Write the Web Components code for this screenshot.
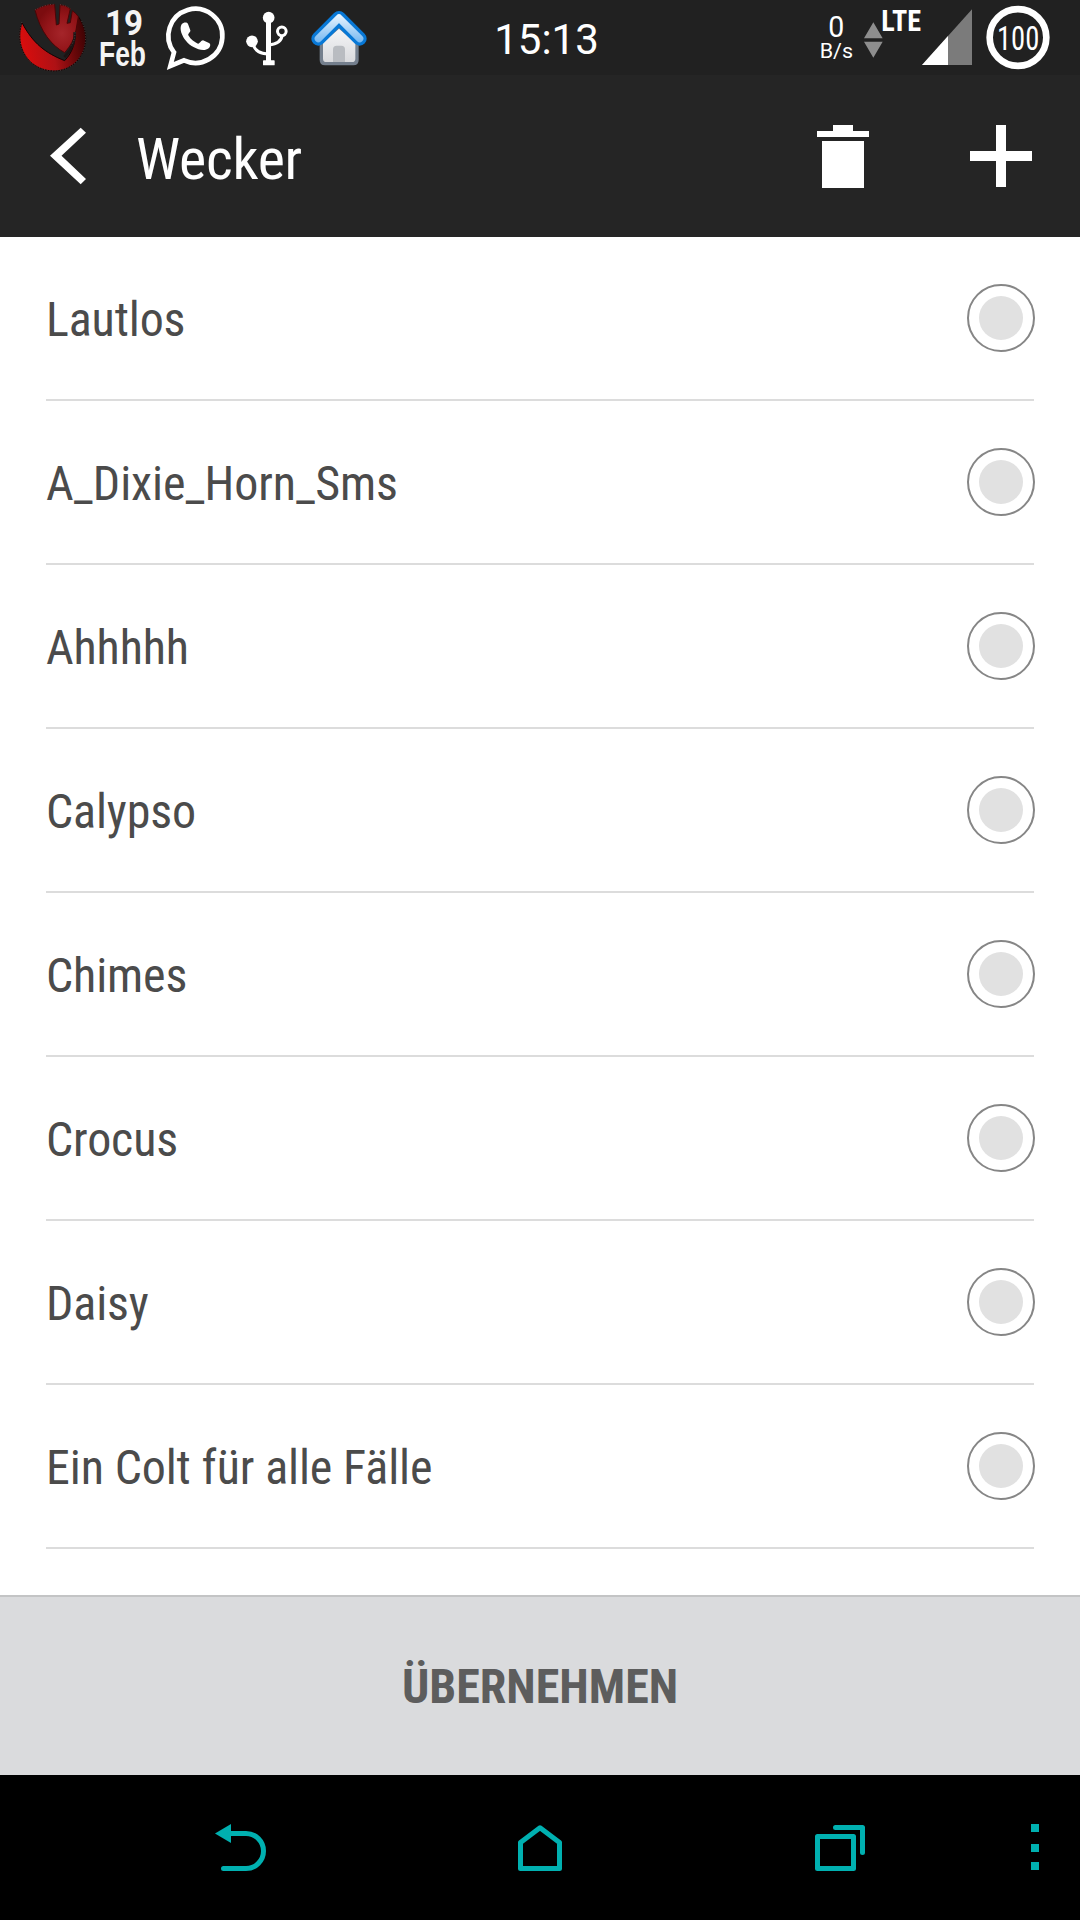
<!DOCTYPE html>
<html lang="de">
<head>
<meta charset="utf-8">
<title>Wecker</title>
<style>
  html, body { margin: 0; background: #fff; }
  body {
    width: 1080px;
    height: 1920px;
    overflow: hidden;
    font-family: "Roboto Condensed", Roboto, sans-serif;
  }
</style>
</head>
<body>
<wk-screen>
  <wk-status slot="status"></wk-status>
  <wk-appbar slot="header">Wecker</wk-appbar>
  <wk-option>Lautlos</wk-option>
  <wk-option>A_Dixie_Horn_Sms</wk-option>
  <wk-option>Ahhhhh</wk-option>
  <wk-option>Calypso</wk-option>
  <wk-option>Chimes</wk-option>
  <wk-option>Crocus</wk-option>
  <wk-option>Daisy</wk-option>
  <wk-option>Ein Colt für alle Fälle</wk-option>
  <wk-button slot="footer">ÜBERNEHMEN</wk-button>
  <wk-navbar slot="nav"></wk-navbar>
</wk-screen>

<script>
(function () {
  "use strict";

  // name: [width, height, viewBox, content]
  var ICONS = {
    // status bar icons are drawn on a 3x grid
    logo: [67, 75, "27 0 201 225",
      '<defs><linearGradient id="r" x1="0" y1=".35" x2="1" y2=".2">' +
      '<stop offset="0" stop-color="#d90d0d"/><stop offset=".45" stop-color="#ae1115"/>' +
      '<stop offset=".75" stop-color="#6c080a"/><stop offset="1" stop-color="#3a0203"/></linearGradient>' +
      '<radialGradient id="m" cx=".62" cy=".6" r=".6"><stop offset="0" stop-color="#a5252a"/>' +
      '<stop offset=".6" stop-color="#931519"/><stop offset="1" stop-color="#7c0c0f"/></radialGradient></defs>' +
      '<path d="M36 68C20 115 33 166 72 194C112 222 168 219 201 183C234 147 236 92 205 50L190 70L190 96C200 120 188 158 164 182C108 160 68 130 36 68Z" fill="url(#r)" stroke="#160202" stroke-width="3"/>' +
      '<path d="M75 30C96 18 115 13 134 13L139 75L147 72L150 14Q168 16 181 26L171 70L181 68L187 32Q198 39 205 50L198 90C192 120 182 137 164 158C125 137 91 95 75 30Z" fill="url(#m)" stroke="#4a0506" stroke-width="3"/>' +
      '<path d="M194 96C198 126 182 152 163 171" fill="none" stroke="#1c1414" stroke-width="8"/>' +
      '<path d="M36 66C20 115 33 166 72 194C112 222 168 219 201 183C228 154 236 105 214 62M75 30C96 18 115 13 134 13M150 14Q168 16 181 26M195 97C195 112 192 124 184 136" fill="none" stroke="#777" stroke-width="1.500" stroke-dasharray="3 5"/>'],
    date: [48, 75, "0 0 48 75",
      '<g fill="#f4f4f4" font-weight="700">' +
      '<text x="5" y="34.500" font-family="Roboto, sans-serif" font-size="34.500" textLength="38" lengthAdjust="spacingAndGlyphs">19</text>' +
      '<text x="-1" y="66" font-family="Liberation Sans, Arial, sans-serif" font-size="34.500" textLength="47" lengthAdjust="spacingAndGlyphs">Feb</text></g>'],
    chat: [62, 75, "27 0 186 225",
      '<path d="M57 157A81 81 0 1 1 87 181L46 198Z" fill="none" stroke="#fff" stroke-width="14" stroke-linejoin="miter"/>' +
      '<path d="M80 73C86 66 96 66 99 72L106 91C107 97 98 101 100 106C107 119 119 127 129 131C134 132 138 121 144 121L162 129C168 132 166 140 161 145C149 155 130 149 117 142C97 131 85 115 79 98C76 88 76 79 80 73Z" fill="#fff"/>'],
    usb: [44, 75, "270 0 132 225",
      '<g fill="#fff"><rect x="333" y="50" width="15" height="140"/><rect x="324" y="181" width="35" height="15" rx="2"/>' +
      '<circle cx="341" cy="53" r="17.500"/><circle cx="291" cy="124" r="17.500"/></g>' +
      '<g fill="none" stroke="#fff" stroke-width="9"><path d="M293 132C302 154 315 161 340 162M381 107C380 123 366 132 341 135"/>' +
      '<circle cx="380.500" cy="94" r="13"/></g>'],
    house: [56, 75, "468 0 168 225",
      '<defs><linearGradient id="b" x1="0" y1="0" x2="0" y2="1"><stop offset="0" stop-color="#f5f5f7"/><stop offset="1" stop-color="#d9dadd"/></linearGradient>' +
      '<linearGradient id="h" gradientUnits="userSpaceOnUse" x1="0" y1="45" x2="0" y2="130"><stop offset="0" stop-color="#eaf5ff"/><stop offset="1" stop-color="#71b5f0"/></linearGradient></defs>' +
      '<path d="M494 112L552 62L611 112V180Q611 196 595 196H510Q494 196 494 180Z" fill="#747f8d"/>' +
      '<path d="M504 128L552 86L601 128V176Q601 186 591 186H514Q504 186 504 176Z" fill="url(#b)"/>' +
      '<path d="M534 186V148Q534 137 545 137H559Q570 137 570 148V186Z" fill="#b9bcc1"/>' +
      '<path d="M490 116L552 54L614 116" fill="none" stroke="#0878d6" stroke-width="42" stroke-linecap="round" stroke-linejoin="round"/>' +
      '<path d="M490 116L552 54L614 116" fill="none" stroke="url(#h)" stroke-width="22" stroke-linecap="round" stroke-linejoin="round"/>'],
    speed: [36, 75, "54 0 108 225",
      '<g fill="#fff" font-family="Roboto, sans-serif"><text x="85" y="111" font-size="91" textLength="48" lengthAdjust="spacingAndGlyphs">0</text>' +
      '<text x="59" y="175" font-size="62" textLength="100" lengthAdjust="spacingAndGlyphs">B/s</text></g>'],
    traffic: [19, 75, "191 0 57 225",
      '<path d="M191 115L219 67L247 115ZM191 125H247L219 173Z" fill="#8e8e8e"/>'],
    signal: [91, 75, "246 0 273 225",
      '<text x="244" y="93" fill="#fff" font-family="Roboto Condensed, Roboto, sans-serif" font-weight="700" font-size="88" textLength="119" lengthAdjust="spacingAndGlyphs">LTE</text>' +
      '<path d="M366 195L516 28V195Z" fill="#7b7b7b"/><path d="M366 195L444 108V195Z" fill="#fff"/>'],
    battery: [64, 75, "558 0 192 225",
      '<circle cx="654" cy="112.500" r="85" fill="none" stroke="#fff" stroke-width="20"/>' +
      '<text x="591" y="149" fill="#fff" font-family="Roboto Condensed, Roboto, sans-serif" font-weight="400" font-size="102" textLength="127" lengthAdjust="spacingAndGlyphs">100</text>'],

    back: [45, 72, "0 0 45 72",
      '<path d="M35.700 7.700L5 35.700L35.700 64.300L41 59L16.500 35.700L41 12.700Z" fill="#fff"/>'],
    trash: [62, 72, "0 0 62 72",
      '<path d="M21 5H41V11H57V17H5V11H21ZM10 21H52V68H10Z" fill="#fff"/>'],
    plus: [72, 72, "0 0 72 72",
      '<path d="M31 5H41V31H67V41H41V67H31V41H5V31H31Z" fill="#fff"/>'],

    "nav-back": [60, 55, "0 0 60 55",
      '<path d="M5 13.500L21 4V23Z" fill="#00b0b0"/>' +
      '<path d="M20 13.500H36A17.500 17.500 0 0 1 36 48.500H13.500" fill="none" stroke="#00b0b0" stroke-width="5" stroke-linecap="round"/>'],
    "nav-home": [60, 55, "0 0 60 55",
      '<path d="M10.500 48.500V22.500L30 7.700L49.500 22.500V48.500Z" fill="none" stroke="#00b0b0" stroke-width="5" stroke-linejoin="round"/>'],
    "nav-recent": [60, 55, "0 0 60 55",
      '<path d="M7.500 16.500H43.500V48.500H7.500ZM25.500 7.500H52.500V32.500" fill="none" stroke="#00b0b0" stroke-width="5" stroke-linejoin="round" stroke-linecap="round"/>'],
    "nav-more": [20, 55, "0 0 20 55",
      '<path d="M6 4h8v8h-8zM6 24h8v8h-8zM6 42h8v8h-8z" fill="#00b0b0"/>']
  };

  class WkIcon extends HTMLElement {
    connectedCallback() {
      var icon = ICONS[this.getAttribute("name")];
      if (!icon || this.shadowRoot) return;
      this.attachShadow({ mode: "open" }).innerHTML =
        "<style>:host{display:block;flex:none}svg{display:block;overflow:visible}</style>" +
        '<svg width="' + icon[0] + '" height="' + icon[1] + '" viewBox="' + icon[2] + '">' +
        icon[3] + "</svg>";
    }
  }
  customElements.define("wk-icon", WkIcon);

  function define(tag, css, html) {
    customElements.define(tag, class extends HTMLElement {
      constructor() {
        super();
        this.attachShadow({ mode: "open" }).innerHTML =
          "<style>" + css + "</style>" + html;
      }
    });
  }

  define("wk-screen",
    ":host{display:flex;flex-direction:column;width:1080px;height:1920px;background:#fff}" +
    "main{flex:1;min-height:0;overflow:hidden;padding:0 46px}",
    '<slot name="status"></slot><slot name="header"></slot>' +
    "<main><slot></slot></main>" +
    '<slot name="footer"></slot><slot name="nav"></slot>');

  define("wk-status",
    ":host{display:grid;grid-template-columns:1fr 120px 1fr;height:75px;background:#212121;color:#fff}" +
    "div{display:flex}" +
    ".left{padding-left:19px}" +
    ".right{justify-content:flex-end;padding-right:30px}" +
    ".clock{font:400 42px/75px Roboto,sans-serif;justify-content:center;padding:2px 0 0 13px;white-space:nowrap}",
    '<div class="left">' +
    '<wk-icon name="logo"></wk-icon>' +
    '<wk-icon name="date" style="margin-left:14px"></wk-icon>' +
    '<wk-icon name="chat" style="margin-left:16px"></wk-icon>' +
    '<wk-icon name="usb" style="margin-left:19px"></wk-icon>' +
    '<wk-icon name="house" style="margin-left:22px"></wk-icon></div>' +
    '<div class="clock">15:13</div>' +
    '<div class="right">' +
    '<wk-icon name="speed"></wk-icon>' +
    '<wk-icon name="traffic" style="margin-left:10px"></wk-icon>' +
    '<wk-icon name="signal" style="margin-left:-1px"></wk-icon>' +
    '<wk-icon name="battery" style="margin-left:13px"></wk-icon></div>');

  define("wk-appbar",
    ":host{display:flex;align-items:center;box-sizing:border-box;height:162px;padding:0 43px 0 45px;background:#252525;color:#fff}" +
    "h1{flex:1;margin:0;padding:5px 0 0 46px;font-size:58px;font-weight:400;line-height:70px;letter-spacing:-.3px}" +
    ".add{margin-left:91px}",
    '<wk-icon name="back"></wk-icon><h1><slot></slot></h1>' +
    '<wk-icon name="trash"></wk-icon><wk-icon class="add" name="plus"></wk-icon>');

  define("wk-option",
    ":host{display:flex;align-items:center;justify-content:space-between;box-sizing:border-box;height:164px;" +
    "border-bottom:2px solid #dcdcdc;color:#4b4b4b;font-size:48px;line-height:60px;letter-spacing:-.12px}" +
    ".label{padding-top:3px}" +
    ".radio{display:grid;place-items:center;box-sizing:border-box;width:68px;height:68px;margin-right:-1px;border:2px solid #868686;border-radius:50%}" +
    ".radio i{width:44px;height:44px;border-radius:50%;background:#e1e1e1}",
    '<span class="label"><slot></slot></span><span class="radio"><i></i></span>');

  define("wk-button",
    ":host{display:flex;align-items:center;justify-content:center;box-sizing:border-box;height:180px;" +
    "padding-top:1px;border-top:2px solid #c3c4c5;background:#dadbdd;color:#5d5d5d;font-size:48px;font-weight:700}",
    "<slot></slot>");

  define("wk-navbar",
    ":host{display:flex;align-items:center;height:145px;padding-left:210px;background:#000}" +
    ".gap{margin-left:240px}.more{margin-left:155px}",
    '<wk-icon name="nav-back"></wk-icon><wk-icon class="gap" name="nav-home"></wk-icon>' +
    '<wk-icon class="gap" name="nav-recent"></wk-icon><wk-icon class="more" name="nav-more"></wk-icon>');
})();
</script>
</body>
</html>
